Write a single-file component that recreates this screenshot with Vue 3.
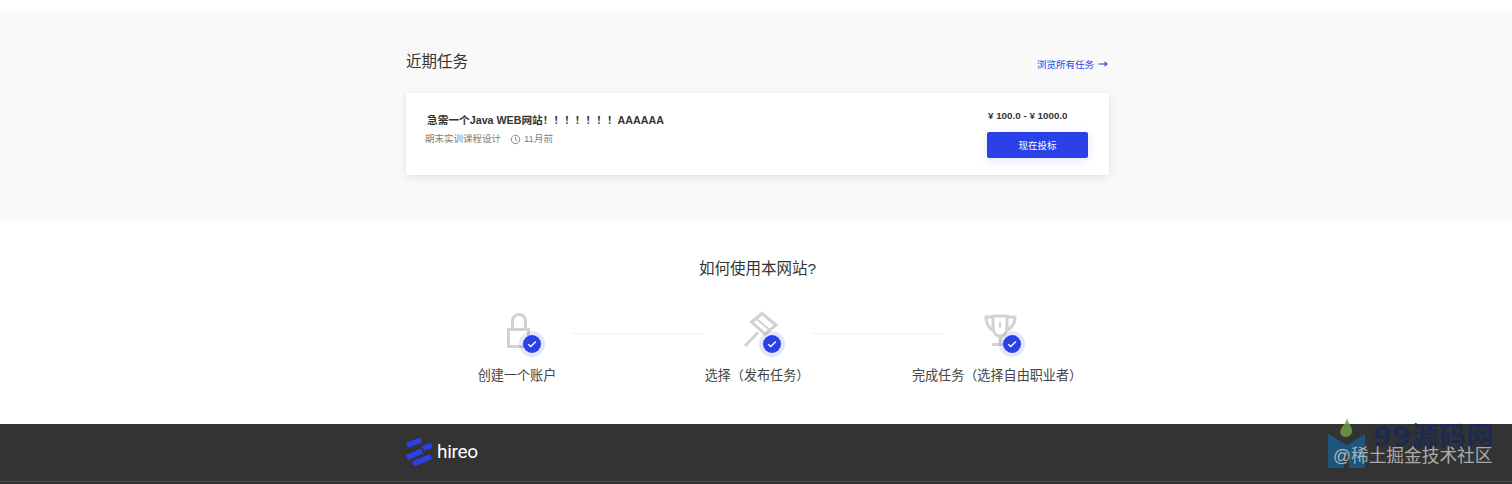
<script setup>
const steps = [
  { key: 'lock', label: '创建一个账户' },
  { key: 'hammer', label: '选择（发布任务）' },
  { key: 'trophy', label: '完成任务（选择自由职业者）' }
]
</script>

<template>
  <div class="page">
    <section class="tasks">
      <div class="tasks-inner">
        <header class="tasks-head">
          <h3 class="tasks-title">近期任务</h3>
          <a class="browse">浏览所有任务
            <svg class="arrow" viewBox="0 0 10 8" width="10" height="8">
              <path d="M0.500 4H9M6.500 1.800L9 4L6.500 6.200" fill="none" stroke="#2a41e8" stroke-width="1.100" />
            </svg>
          </a>
        </header>
        <article class="card">
          <div class="card-info">
            <h4 class="card-title">急需一个Java WEB网站！！！！！！！AAAAAA</h4>
            <div class="card-meta">
              <span>期末实训课程设计</span>
              <span class="when">
                <svg class="clock" viewBox="0 0 12 12" width="11" height="11">
                  <circle cx="6" cy="6" r="4.600" fill="none" stroke="#808080" stroke-width="1" />
                  <path d="M6 3.200V6.200L8 7.200" fill="none" stroke="#808080" stroke-width="1" />
                </svg>
                <span>11月前</span>
              </span>
            </div>
          </div>
          <div class="card-side">
            <div class="price">¥ 100.0 - ¥ 1000.0</div>
            <button class="bid">现在投标</button>
          </div>
        </article>
      </div>
    </section>

    <section class="how">
      <h3 class="how-title">如何使用本网站?</h3>
      <div class="steps">
        <div v-for="(s, i) in steps" :key="s.key" class="step" :class="{ linked: i < 2 }">
          <div class="icon-box">
            <svg class="glyph" viewBox="0 0 48 48" width="48" height="48" fill="none" stroke="#d2d2d2" stroke-width="3">
              <template v-if="s.key === 'lock'">
                <rect x="15.500" y="20.500" width="20" height="17" />
                <path d="M19.500 20V12a6.500 6.500 0 0 1 13 0V20" />
              </template>
              <template v-else-if="s.key === 'hammer'">
                <path d="M29 4.500L18.500 13L32 25L43 16Z" />
                <path d="M23 9.500L37 21" stroke-width="2" />
                <path d="M25 23.500L12 37" />
              </template>
              <template v-else>
                <path d="M20 7H34V18C34 24 31 27 27 27C23 27 20 24 20 18Z" />
                <path d="M20 8H13C13 15 15 19 21 22" />
                <path d="M34 8H42C42 15 39 19 33 22" />
                <path d="M27 27V34" />
                <path d="M19 35.500H36" />
                <path d="M27 13V19" stroke-width="2" />
              </template>
            </svg>
            <span class="badge">
              <svg viewBox="0 0 18 18" width="18" height="18">
                <path d="M5.200 9.200L7.800 11.600L12.800 6.600" fill="none" stroke="#fff" stroke-width="1.400" />
              </svg>
            </span>
          </div>
          <div class="step-label">{{ s.label }}</div>
        </div>
      </div>
    </section>

    <footer class="footer">
      <div class="footer-main">
        <div class="brand">
          <svg viewBox="0 0 26 28" width="26" height="28" fill="none" stroke="#2a41e8" stroke-width="5.500">
            <path d="M1 7.500L15 2" />
            <path d="M17 10.500L26 7" />
            <path d="M1 19.500L16 13" />
            <path d="M7 26L25 18.500" />
          </svg>
          <span class="brand-name">hireo</span>
        </div>
      </div>
      <div class="footer-rule"></div>
    </footer>

    <div class="watermark">
      <svg class="wm-logo" viewBox="0 0 38 50" width="38" height="50">
        <path d="M19 0C20 6 25 9 24 14C23 18 20 19 17 19C13 18 11 15 13 11C14 8 18 6 19 0Z" fill="#6d9f42" />
        <path d="M0 16L19 27L37 16V50H21V38H16V50H0Z" fill="#1a5c88" />
      </svg>
      <span class="wm-site">99源码网</span>
      <span class="wm-credit">@稀土掘金技术社区</span>
    </div>
  </div>
</template>

<style>
html, body { margin: 0; background: #fff; }
</style>

<style scoped>
.page {
  position: relative;
  width: 1512px;
  height: 484px;
  overflow: hidden;
  padding-top: 12px;
  box-sizing: border-box;
  background: #fff;
  font-family: "Liberation Sans", "Noto Sans CJK SC", sans-serif;
  color: #333;
}
.tasks {
  height: 208px;
  background: #f9f9f9;
}
.tasks-inner {
  width: 703px;
  margin-left: 406px;
  padding-top: 39px;
}
.tasks-head {
  display: flex;
  justify-content: space-between;
  align-items: center;
  height: 22px;
}
.tasks-title {
  margin: 0;
  font-size: 15.500px;
  font-weight: 400;
  color: #333;
  line-height: 22px;
}
.browse {
  display: flex;
  align-items: center;
  gap: 4px;
  margin-top: 3px;
  font-size: 9.500px;
  color: #2a41e8;
  padding-right: 1px;
}
.arrow { display: block; }
.card {
  display: flex;
  justify-content: space-between;
  height: 82px;
  margin-top: 20px;
  background: #fff;
  border-radius: 3px;
  box-shadow: 0 2px 10px rgba(0, 0, 0, .1);
  box-sizing: border-box;
}
.card-info { padding: 20px 0 0 19px; }
.card-title {
  margin: 0 0 0 2px;
  font-size: 10.700px;
  line-height: 14px;
  font-weight: 700;
  color: #333;
}
.card-meta {
  display: flex;
  gap: 9px;
  margin-top: 5px;
  font-size: 9.500px;
  line-height: 14px;
  color: #808080;
}
.when { display: flex; align-items: center; gap: 2px; white-space: pre; }
.clock { margin-right: 1px; }
.card-side {
  width: 101px;
  padding: 16px 21px 0 0;
}
.price {
  margin-left: 1px;
  font-size: 9.800px;
  line-height: 14px;
  font-weight: 700;
  color: #333;
  white-space: nowrap;
}
.bid {
  display: block;
  width: 101px;
  height: 26px;
  margin-top: 9px;
  padding: 0;
  border: 0;
  border-radius: 2px;
  background: #2a41e8;
  box-shadow: 0 2px 8px rgba(42, 65, 232, .15);
  color: #fff;
  font: inherit;
  font-size: 9.500px;
}
.how {
  height: 204px;
  padding-top: 38px;
  box-sizing: border-box;
  text-align: center;
}
.how-title {
  margin: 0;
  font-size: 15.500px;
  font-weight: 400;
  line-height: 22px;
  color: #333;
  padding-left: 3px;
}
.steps {
  display: grid;
  grid-template-columns: repeat(3, 240px);
  margin: 29px 0 0 397px;
}
.step { position: relative; }
.step.linked::after {
  content: "";
  position: absolute;
  left: 175px;
  top: 24px;
  width: 132px;
  height: 1px;
  background: #f0f0f0;
}
.icon-box {
  position: relative;
  width: 48px;
  height: 48px;
  margin: 0 auto;
}
.glyph { display: block; }
.badge {
  position: absolute;
  left: 30px;
  top: 26px;
  width: 18px;
  height: 18px;
  border-radius: 50%;
  background: #2a41e8;
  box-shadow: 0 0 0 4px rgba(42, 65, 232, .13);
}
.badge svg { display: block; }
.step-label {
  margin-top: 9px;
  font-size: 13.100px;
  line-height: 20px;
  color: #444;
  white-space: nowrap;
}
.footer {
  height: 60px;
  background: #333;
  display: flex;
  flex-direction: column;
}
.footer-main { flex: 1; padding-left: 406px; }
.brand {
  display: flex;
  align-items: center;
  gap: 5px;
  padding-top: 14px;
}
.brand-name {
  font-family: "Roboto", sans-serif;
  font-size: 19px;
  line-height: 28px;
  color: #fff;
  letter-spacing: -.3px;
}
.footer-rule {
  height: 1px;
  background: #4a4a4a;
  margin-bottom: 2px;
}
.watermark {
  position: absolute;
  left: 1328px;
  top: 418px;
  width: 184px;
  height: 60px;
}
.wm-logo { position: absolute; left: 0; top: 0; opacity: .85; }
.wm-site {
  position: absolute;
  left: 45px;
  top: 3px;
  font-family: "DejaVu Sans", "Noto Sans CJK SC", sans-serif;
  font-size: 27px;
  line-height: 32px;
  font-weight: 700;
  color: #1c2a52;
  letter-spacing: .5px;
  white-space: nowrap;
  opacity: .9;
}
.wm-credit {
  position: absolute;
  left: 5px;
  top: 26px;
  font-size: 17.700px;
  line-height: 24px;
  color: rgba(205, 205, 205, .8);
  white-space: nowrap;
}
</style>
